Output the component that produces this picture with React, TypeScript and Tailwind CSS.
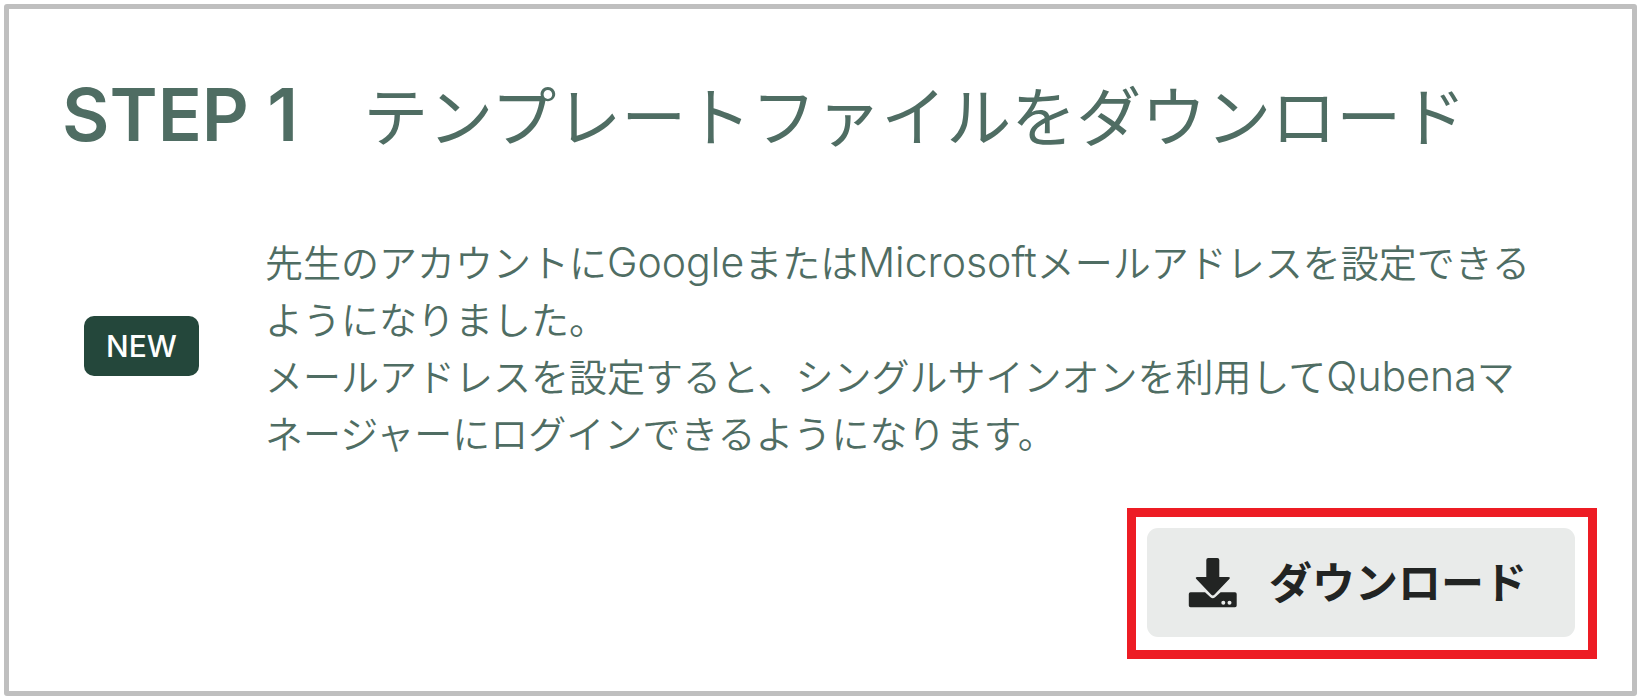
import type { ReactNode } from "react";

function DownloadIcon() {
  return (
    <svg viewBox="0 0 50 50" className="h-[50px] w-[50px] shrink-0" fill="currentColor" aria-hidden="true">
      <path d="M20.300 0h9q2 0 2 2v17h9q2.500 0 1 2L26.300 36.800q-1.500 1.200-3 0L8.300 21q-1.400-2 1-2h9V2q0-2 2-2Z" />
      <path
        fillRule="evenodd"
        d="M2.500 34.200H17l5.500 5q2.300 2 4.600 0l5.500-5H47q1.700 0 1.700 1.700V47.500q0 1.700-1.700 1.700H2.500Q.8 49.200.8 47.500V35.900q0-1.700 1.700-1.700ZM35.300 42.800a2 2 0 1 0 0 4 2 2 0 0 0 0-4Zm6.200 0a2 2 0 1 0 0 4 2 2 0 0 0 0-4Z"
      />
    </svg>
  );
}

function Latin({ children }: { children: ReactNode }) {
  return <span className="font-['Inter',sans-serif] text-[41px] leading-none">{children}</span>;
}

export default function App() {
  return (
    <div className="flex min-h-screen bg-white pt-1 pr-[3px] pl-1 font-['Noto_Sans_CJK_JP',sans-serif] text-[#4f6d63]">
      <main className="flex grow flex-col rounded-[3px] border-[5px] border-[#bfbfbf]">
        <h1 className="flex items-baseline gap-[65px] pt-[54px] pl-[53px] text-[65px] leading-[100px] font-normal">
          <span className="font-['Inter',sans-serif] text-[73px] font-semibold">STEP 1</span>
          <span>テンプレートファイルをダウンロード</span>
        </h1>
        <div className="flex items-center gap-[66px] pt-[67px] pr-[70px] pl-[75px]">
          <span className="flex h-[60px] w-[115px] shrink-0 items-center justify-center rounded-[10px] bg-[#24473b] font-['Inter',sans-serif] text-[30px] font-medium text-white">
            NEW
          </span>
          <p className="text-[38px] leading-[57px] font-[350]">
            先生のアカウントに<Latin>Google</Latin>または<Latin>Microsoft</Latin>メールアドレスを設定できる
            <br />
            ようになりました。
            <br />
            メールアドレスを設定すると、シングルサインオンを利用して<Latin>Qubena</Latin>マ
            <br />
            ネージャーにログインできるようになります。
          </p>
        </div>
        <div className="mt-auto mr-[35px] mb-[32px] self-end border-[9px] border-[#ed1c24] pt-[11px] pr-[13px] pb-[13px] pl-[11px]">
          <button
            type="button"
            className="flex h-[109px] items-center gap-[31px] rounded-[11px] bg-[#e9ebea] pr-[48px] pl-[41px] text-[43px] font-bold text-[#222423]"
          >
            <DownloadIcon />
            <span className="pb-1">ダウンロード</span>
          </button>
        </div>
      </main>
    </div>
  );
}
